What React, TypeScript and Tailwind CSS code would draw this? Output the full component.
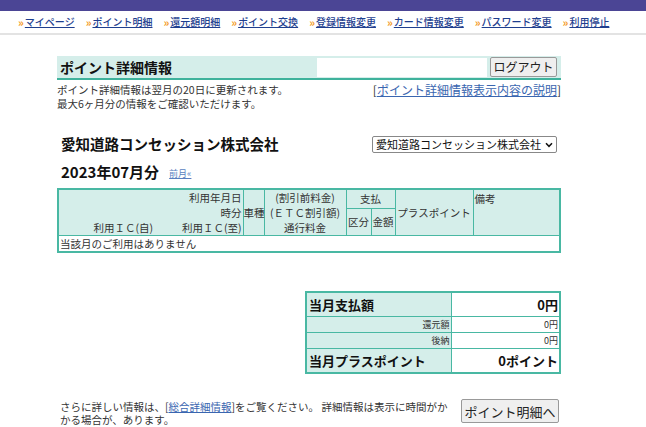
import React from "react";

const navItems = [
  "マイページ",
  "ポイント明細",
  "還元額明細",
  "ポイント交換",
  "登録情報変更",
  "カード情報変更",
  "パスワード変更",
  "利用停止",
];

export default function App() {
  return (
    <div
      className="w-[646px] h-[427px] bg-white text-[#333] overflow-hidden"
      style={{ fontFamily: '"Noto Sans CJK JP", "Noto Sans", sans-serif' }}
    >
      <div className="h-[11px] bg-[#4b4595]" />
      <div className="h-[24px] border-b-2 border-[#e3e3e3] flex items-center pl-[18px] gap-[11px] text-[10px] leading-none">
        {navItems.map((n) => (
          <div key={n} className="flex items-center">
            <span className="text-[#f39a1e] text-[11px] font-bold mr-[1px] leading-none">»</span>
            <a className="text-[#1f3f8f] underline decoration-[#1f3f8f] font-medium">{n}</a>
          </div>
        ))}
      </div>

      <div className="ml-[57px] w-[504px]">
        <div className="mt-[21px] h-[24px] bg-[#d5eeea] border-b-2 border-[#3fb29c] flex items-center">
          <div className="pl-[3px] text-[14px] font-bold text-[#111] flex-1 leading-none">ポイント詳細情報</div>
          <div className="w-[170px] h-[19px] bg-white mr-[3px]" />
          <button className="w-[67px] h-[20px] mr-[4px] bg-[#efefef] border border-[#999] rounded-[2px] text-[12px] leading-none text-[#222]">
            ログアウト
          </button>
        </div>
        <div className="flex justify-between mt-[3px]">
          <div className="text-[10.5px] leading-[14px] text-[#333]">
            <div>ポイント詳細情報は翌月の20日に更新されます。</div>
            <div>最大6ヶ月分の情報をご確認いただけます。</div>
          </div>
          <div className="text-[12px] leading-[14px] text-[#333]">
            [<a className="text-[#3a66b0] underline">ポイント詳細情報表示内容の説明</a>]
          </div>
        </div>

        <div className="flex justify-between items-center mt-[25px]">
          <div className="pl-[4px] text-[14.5px] font-bold text-[#111] leading-none">愛知道路コンセッション株式会社</div>
          <div className="mr-[4px] w-[185px] h-[17px] border border-[#888] rounded-[2px] flex items-center justify-between pl-[3px] pr-[3px] text-[11px] leading-none text-[#111]">
            <span>愛知道路コンセッション株式会社</span>
            <svg width="8" height="6" viewBox="0 0 8 6">
              <path d="M1 1.2 L4 4.3 L7 1.2" fill="none" stroke="#111" strokeWidth="1.5" />
            </svg>
          </div>
        </div>

        <div className="flex items-end mt-[11px] pl-[4px]">
          <span className="text-[15px] font-bold text-[#111] leading-none">2023年07月分</span>
          <a className="ml-[10px] text-[9px] text-[#5a7fc0] underline leading-none mb-[1px]">前月«</a>
        </div>

        <table className="mt-[9px] w-[504px] table-fixed border-collapse border-2 border-[#49b8a3] text-[10.5px] leading-[15px] text-[#333]">
          <colgroup>
            <col className="w-[185px]" />
            <col className="w-[21px]" />
            <col className="w-[82px]" />
            <col className="w-[25px]" />
            <col className="w-[24px]" />
            <col className="w-[78px]" />
            <col />
          </colgroup>
          <tbody>
            <tr className="bg-[#d5eeea]">
              <td rowSpan={2} className="border border-[#49b8a3] p-0 pr-[1px] align-bottom h-[46px]">
                <div className="text-right">利用年月日</div>
                <div className="text-right">時分</div>
                <div className="flex">
                  <div className="w-[94px] text-right">利用ＩＣ(自)</div>
                  <div className="flex-1 text-right">利用ＩＣ(至)</div>
                </div>
              </td>
              <td rowSpan={2} className="border border-[#49b8a3] p-0 text-center whitespace-nowrap">車種</td>
              <td rowSpan={2} className="border border-[#49b8a3] p-0 text-center whitespace-nowrap">
                <div>(割引前料金)</div>
                <div>(ＥＴＣ割引額)</div>
                <div>通行料金</div>
              </td>
              <td colSpan={2} className="border border-[#49b8a3] p-0 text-center h-[19px] align-top pt-[1px]">支払</td>
              <td rowSpan={2} className="border border-[#49b8a3] p-0 text-center whitespace-nowrap">プラスポイント</td>
              <td rowSpan={2} className="border border-[#49b8a3] p-0 pl-[1px] align-top pt-[1px]">備考</td>
            </tr>
            <tr className="bg-[#d5eeea]">
              <td className="border border-[#49b8a3] p-0 text-center whitespace-nowrap">区分</td>
              <td className="border border-[#49b8a3] p-0 text-center whitespace-nowrap">金額</td>
            </tr>
            <tr>
              <td colSpan={7} className="border border-[#49b8a3] p-0 pl-[1px] h-[16px] bg-white">当該月のご利用はありません</td>
            </tr>
          </tbody>
        </table>

        <div className="flex justify-end mt-[38px]">
          <table className="w-[256px] table-fixed border-collapse border-2 border-[#49b8a3] text-[#333]">
            <colgroup>
              <col className="w-[145px]" />
              <col />
            </colgroup>
            <tbody>
              <tr className="h-[24px]">
                <td className="border border-[#49b8a3] bg-[#d5eeea] pl-[2px] text-[13px] font-bold text-[#111] leading-none">当月支払額</td>
                <td className="border border-[#49b8a3] text-right pr-[1px] text-[13px] font-bold text-[#111] leading-none">0円</td>
              </tr>
              <tr className="h-[16px]">
                <td className="border border-[#49b8a3] bg-[#d5eeea] text-right pr-[1px] text-[9px] leading-none">還元額</td>
                <td className="border border-[#49b8a3] text-right pr-[1px] text-[9px] leading-none">0円</td>
              </tr>
              <tr className="h-[16px]">
                <td className="border border-[#49b8a3] bg-[#d5eeea] text-right pr-[1px] text-[9px] leading-none">後納</td>
                <td className="border border-[#49b8a3] text-right pr-[1px] text-[9px] leading-none">0円</td>
              </tr>
              <tr className="h-[25px]">
                <td className="border border-[#49b8a3] bg-[#d5eeea] pl-[2px] text-[13px] font-bold text-[#111] leading-none">当月プラスポイント</td>
                <td className="border border-[#49b8a3] text-right pr-[1px] text-[13px] font-bold text-[#111] leading-none">0ポイント</td>
              </tr>
            </tbody>
          </table>
        </div>

        <div className="flex items-start mt-[26px] pl-[3px]">
          <div className="w-[390px] text-[10.5px] leading-[13px] text-[#333]">
            さらに詳しい情報は、[<a className="text-[#3a66b0] underline">総合詳細情報</a>]をご覧ください。 詳細情報は表示に時間がかかる場合が、あります。
          </div>
          <button className="ml-[11px] mt-[-1px] w-[98px] h-[24px] bg-[#efefef] border border-[#999] rounded-[2px] text-[13px] leading-none text-[#222]">
            ポイント明細へ
          </button>
        </div>
      </div>
    </div>
  );
}
